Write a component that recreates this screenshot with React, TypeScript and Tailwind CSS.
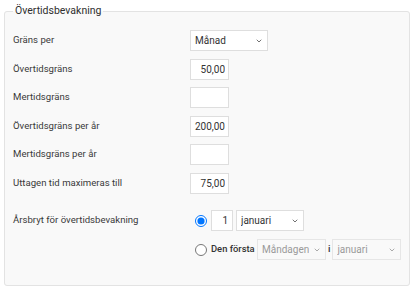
import React, { useState } from "react";
import { ChevronDown } from "lucide-react";

const labelRows = [
  { label: "Gräns per", kind: "select", value: "Månad" },
  { label: "Övertidsgräns", kind: "input", value: "50,00" },
  { label: "Mertidsgräns", kind: "input", value: "" },
  { label: "Övertidsgräns per år", kind: "input", value: "200,00" },
  { label: "Mertidsgräns per år", kind: "input", value: "" },
  { label: "Uttagen tid maximeras till", kind: "input", value: "75,00" },
];

const months = ["januari", "februari", "mars", "april", "maj", "juni", "juli", "augusti", "september", "oktober", "november", "december"];
const days = ["Måndagen", "Tisdagen", "Onsdagen", "Torsdagen", "Fredagen", "Lördagen", "Söndagen"];

const SelectBox = ({
  value,
  options,
  width,
  disabled,
}: {
  value: string;
  options: string[];
  width: string;
  disabled?: boolean;
}) => (
  <div className={`relative h-[21px] shrink-0 ${width}`}>
    <select
      defaultValue={value}
      disabled={disabled}
      className={`h-full w-full appearance-none border pl-[4px] pr-4 text-[10px] outline-none ${
        disabled ? "border-[#e6e6e6] bg-[#f9f9f9] text-[#9a9a9a]" : "border-[#dedede] bg-white text-[#333]"
      }`}
    >
      {options.map((o) => (
        <option key={o} value={o}>
          {o}
        </option>
      ))}
    </select>
    <ChevronDown
      className={`pointer-events-none absolute right-[5px] top-[7px] h-[8px] w-[8px] ${disabled ? "text-[#9a9a9a]" : "text-[#555]"}`}
      strokeWidth={2.5}
    />
  </div>
);

export default function App() {
  const [mode, setMode] = useState("date");
  const [values, setValues] = useState<Record<string, string>>(
    Object.fromEntries(labelRows.map((r) => [r.label, r.value]))
  );

  return (
    <div className="min-h-[291px] bg-white px-[4px] pt-[4px] pb-[4px] pr-[3px] font-['Roboto',sans-serif] text-[9.6px] text-[#3a3a3a]">
      <fieldset className="h-[282px] rounded-[3px] border border-[#e3e3e3] bg-[#f9f9f9] pl-[8px] pr-[2px]">
        <legend className="px-[2px] text-[10.5px] leading-[14px] text-[#2e2e2e]">Övertidsbevakning</legend>

        <div className="flex flex-col gap-[7.5px] pt-[12px]">
          {labelRows.map((row) => (
            <div key={row.label} className="flex h-[21px] items-center">
              <span className="w-[177px] shrink-0 whitespace-nowrap">{row.label}</span>
              {row.kind === "select" ? (
                <SelectBox value={row.value} options={["Dag", "Vecka", "Månad", "År"]} width="w-[78px]" />
              ) : (
                <input
                  type="text"
                  value={values[row.label]}
                  onChange={(e) => setValues({ ...values, [row.label]: e.target.value })}
                  className="h-[21px] w-[39px] border border-[#dedede] bg-white px-[3px] text-right text-[10px] text-[#333] outline-none"
                />
              )}
            </div>
          ))}
        </div>

        {/* Årsbryt */}
        <div className="mt-[16.5px] flex">
          <span className="flex h-[21px] w-[177px] shrink-0 items-center whitespace-nowrap">Årsbryt för övertidsbevakning</span>
          <div className="flex shrink-0 flex-col gap-[8px]">
            <div className="flex h-[21px] items-center">
              <input
                type="radio"
                name="arsbryt"
                checked={mode === "date"}
                onChange={() => setMode("date")}
                className="ml-[5px] h-[12px] w-[12px] shrink-0"
              />
              <input
                type="text"
                defaultValue="1"
                className="ml-[4px] h-[21px] w-[22px] shrink-0 border border-[#dedede] bg-white px-[4px] text-right text-[10px] text-[#333] outline-none"
              />
              <div className="ml-[3px] shrink-0">
                <SelectBox value="januari" options={months} width="w-[68px]" />
              </div>
            </div>
            <div className="flex h-[21px] items-center">
              <input
                type="radio"
                name="arsbryt"
                checked={mode === "weekday"}
                onChange={() => setMode("weekday")}
                className="ml-[5px] h-[12px] w-[12px] shrink-0"
              />
              <span className="ml-[4px] w-[44px] shrink-0 whitespace-nowrap text-[9.4px] font-medium text-[#333]">Den första</span>
              <div className="ml-[2px] shrink-0">
                <SelectBox value="Måndagen" options={days} width="w-[69px]" disabled={mode !== "weekday"} />
              </div>
              <span className="mx-[2px] shrink-0 font-medium text-[#333]">i</span>
              <SelectBox value="januari" options={months} width="w-[69px]" disabled={mode !== "weekday"} />
            </div>
          </div>
        </div>
      </fieldset>
    </div>
  );
}
